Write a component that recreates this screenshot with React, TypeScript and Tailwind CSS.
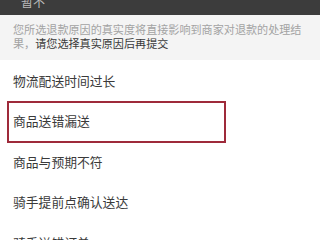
import React from "react";

const reasons = ["物流配送时间过长", "商品送错漏送", "商品与预期不符", "骑手提前点确认送达", "骑手送错订单"];

export default function App() {
  return (
    <div
      className="relative w-[320px] h-[240px] overflow-hidden bg-white"
      style={{ fontFamily: '"Noto Sans CJK SC", "Noto Sans", sans-serif' }}
    >
      <div className="h-[15px] bg-[#3c3c3c] overflow-hidden">
        <div className="pl-[21px] -mt-[6px] text-[12px] leading-[16px] text-[#bdbdbd]">暂不</div>
      </div>
      <div className="h-[45px] bg-[#f4f4f4] px-[13px] pt-[7px] text-[11.1px] leading-[14px] text-[#a3a3a3]">
        您所选退款原因的真实度将直接影响到商家对退款的处理结果，
        <span className="text-[#3a3a3a]">请您选择真实原因后再提交</span>
      </div>
      <div className="flex flex-col">
        {reasons.map((r) => (
          <div key={r} className="h-[40.5px] flex items-center px-[13px] text-[12.8px] text-[#3a3a3a] shrink-0">
            {r}
          </div>
        ))}
      </div>
      <div className="absolute left-[7px] top-[101px] w-[219px] h-[42px] border-2 border-[#9e2a3a]" />
    </div>
  );
}
